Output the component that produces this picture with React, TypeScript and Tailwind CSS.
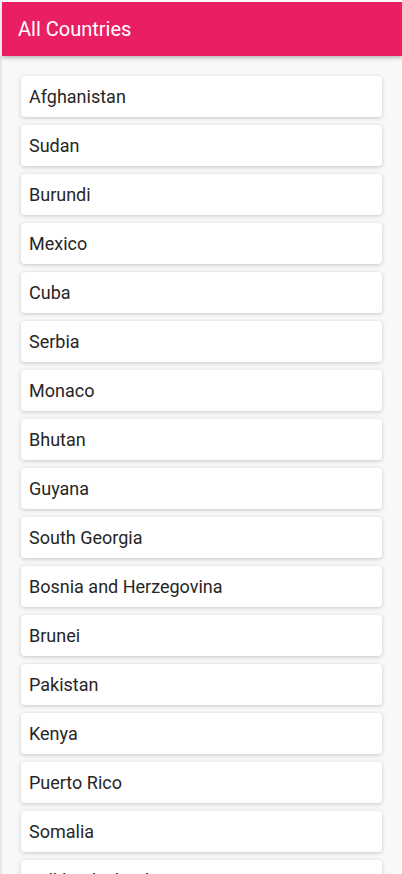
const countries = [
  'Afghanistan',
  'Sudan',
  'Burundi',
  'Mexico',
  'Cuba',
  'Serbia',
  'Monaco',
  'Bhutan',
  'Guyana',
  'South Georgia',
  'Bosnia and Herzegovina',
  'Brunei',
  'Pakistan',
  'Kenya',
  'Puerto Rico',
  'Somalia',
  'Falkland Islands',
]

export default function App() {
  return (
    <div
      className="h-[874px] overflow-hidden bg-white pt-[2px]"
      style={{ fontFamily: 'Roboto, "Noto Sans", sans-serif' }}
    >
      {/* App bar */}
      <div className="relative z-10 ml-[2px] flex h-[54px] items-center bg-[#e91e63] pl-4 shadow-[0_2px_4px_rgba(0,0,0,0.25)]">
        <span className="text-[20px] text-white">All Countries</span>
      </div>

      {/* List */}
      <div className="h-full border-l-2 border-[#e6e6e6] bg-[#f8f8f8] px-[19px] pt-[20px]">
        <div className="flex flex-col gap-[8px] pr-[1px]">
          {countries.map((c) => (
            <div
              key={c}
              className="flex h-[41px] items-center rounded-[4px] bg-white pl-[8px] text-[18px] text-[#262626] shadow-[0_1px_4px_rgba(0,0,0,0.2)]"
            >
              {c}
            </div>
          ))}
        </div>
      </div>
    </div>
  )
}
